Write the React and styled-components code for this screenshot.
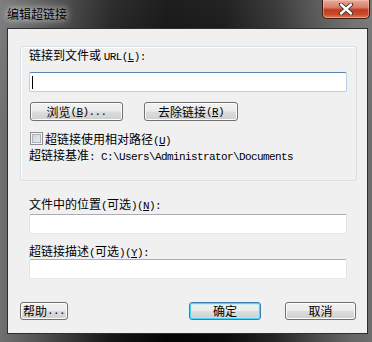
import React from 'react';
import styled, { createGlobalStyle } from 'styled-components';

const Global = createGlobalStyle`
  html, body { margin: 0; padding: 0; background: #1a1a1a; }
  body { width: 372px; height: 342px; overflow: hidden; }
`;

const Window = styled.div`
  width: 372px;
  height: 342px;
  box-sizing: border-box;
  display: flex;
  flex-direction: column;
  padding: 0 4px 8px 7px;
  background:
    linear-gradient(180deg, rgba(255,255,255,0.10) 0%, rgba(255,255,255,0) 40%),
    linear-gradient(90deg, #707070 0%, #5a5a5a 8%, #3a3a3a 18%, #161616 30%, #050505 45%, #0a0a0a 60%, #262626 74%, #4e4e4e 86%, #676767 95%, #6d6d6d 100%);
  font-family: "Noto Sans CJK SC", sans-serif;
  font-size: 12px;
  color: #000;
`;

const TitleBar = styled.div`
  height: 28px;
  flex: none;
  display: flex;
  align-items: flex-start;
`;

const Title = styled.div`
  margin-top: 6px;
  font-size: 12px;
  line-height: 16px;
  color: #000;
  text-shadow: 0 0 6px rgba(255,255,255,0.85), 0 0 10px rgba(255,255,255,0.6);
`;

const CloseButton = styled.div`
  margin-left: auto;
  margin-right: -2px;
  width: 48px;
  height: 19px;
  box-sizing: border-box;
  border: 1px solid #3b1c16;
  border-top: none;
  border-radius: 0 0 5px 5px;
  background: linear-gradient(180deg, #e9a89a 0%, #d8806d 40%, #c23a1f 55%, #c94b2c 80%, #e07b56 100%);
  box-shadow: inset 0 0 0 1px rgba(255,210,190,0.45);
  display: flex;
  align-items: center;
  justify-content: center;
`;

const Client = styled.div`
  flex: 1;
  display: flex;
  flex-direction: column;
  background: #f0f0f0;
  border: 1px solid #2e2e2e;
  padding: 17px 10px 0 12px;
`;

const Group = styled.div`
  display: flex;
  flex-direction: column;
  border: 1px solid #d5dfe5;
  border-radius: 3px;
  padding: 1px 9px 18px 8px;
  box-shadow: inset 1px 1px 0 #fff;
`;

const Label = styled.div`
  height: 14px;
  line-height: 14px;
  white-space: nowrap;
  margin-top: ${p => p.$mt || 0}px;
  margin-left: ${p => p.$ml || 0}px;
  margin-right: ${p => p.$mr || 0}px;
`;

const Latin = styled.span`
  font-family: "Liberation Mono", monospace;
  font-size: 11px;
  letter-spacing: -0.6px;
`;

const TextBox = styled.div`
  height: 20px;
  box-sizing: border-box;
  background: #fff;
  border: 1px solid;
  border-color: ${p => p.$focus ? '#5c84ad #b5cfe7 #b7d3ec #b5cfe7' : '#abadb3 #e2e3ea #e3e9ef #e2e3ea'};
  border-radius: 2px;
  margin-top: ${p => p.$mt || 0}px;
  margin-left: ${p => p.$ml || 0}px;
  margin-right: ${p => p.$mr || 0}px;
  display: flex;
  align-items: center;
  padding-left: 2px;
`;

const Caret = styled.span`
  width: 1px;
  height: 13px;
  background: #000;
`;

const ButtonRow = styled.div`
  display: flex;
  align-items: center;
  margin-top: ${p => p.$mt || 0}px;
  margin-left: ${p => p.$ml || 0}px;
  margin-right: ${p => p.$mr || 0}px;
  gap: ${p => p.$gap || 0}px;
`;

const Button = styled.div`
  width: ${p => p.$w}px;
  height: ${p => p.$h || 19}px;
  box-sizing: border-box;
  border: 1px solid ${p => p.$default ? '#3c7fb1' : '#707070'};
  border-radius: 3px;
  background: linear-gradient(180deg, #f2f2f2 0%, #ebebeb 48%, #dddddd 52%, #cfcfcf 100%);
  box-shadow: ${p => p.$default ? 'inset 0 0 0 1px #48d4f8, inset 0 0 0 2px rgba(180,235,252,0.6)' : 'inset 0 0 0 1px #fcfcfc'};
  display: flex;
  align-items: center;
  justify-content: ${p => p.$start ? 'flex-start' : 'center'};
  padding-left: ${p => p.$start ? 2 : 0}px;
  line-height: 14px;
  white-space: nowrap;
`;

const Spacer = styled.div`
  flex: 1;
`;

const CheckRow = styled.div`
  display: flex;
  align-items: center;
  height: 14px;
  margin-top: 10px;
  padding-left: 1px;
  gap: 2px;
`;

const CheckBox = styled.span`
  width: 13px;
  height: 13px;
  box-sizing: border-box;
  border: 1px solid #8e8f8f;
  background: #f4f4f4;
  box-shadow: inset 0 0 0 1px #f4f4f4, inset 0 0 0 2px #aeb3b9;
  background-image: linear-gradient(135deg, #cbcfd5 0%, #eef0f2 100%);
  flex: none;
`;

const u = (c) => <u>{c}</u>;

export default function App() {
  return (
    <>
      <Global />
      <Window>
        <TitleBar>
          <Title>编辑超链接</Title>
          <CloseButton>
            <svg width="16" height="12" viewBox="0 0 16 12">
              <path d="M3 1.5 L13 10.5 M13 1.5 L3 10.5" stroke="#3a2a26" strokeWidth="4.2" strokeLinecap="round" />
              <path d="M3 1.5 L13 10.5 M13 1.5 L3 10.5" stroke="#ffffff" strokeWidth="2.4" strokeLinecap="round" />
            </svg>
          </CloseButton>
        </TitleBar>
        <Client>
          <Group>
            <Label>链接到文件或 <Latin>URL({u('L')}):</Latin></Label>
            <TextBox $focus $mt={10}><Caret /></TextBox>
            <ButtonRow $mt={10} $gap={21} $ml={1}>
              <Button $w={93}>浏览<Latin>({u('B')})...</Latin></Button>
              <Button $w={94}>去除链接<Latin>({u('R')})</Latin></Button>
            </ButtonRow>
            <CheckRow>
              <CheckBox />
              <span>超链接使用相对路径<Latin>({u('U')})</Latin></span>
            </CheckRow>
            <Label $mt={3}>超链接基准<Latin>: C:\Users\Administrator\Documents</Latin></Label>
          </Group>
          <Label $mt={16} $ml={9}>文件中的位置<Latin>(</Latin>可选<Latin>)({u('N')}):</Latin></Label>
          <TextBox $mt={3} $ml={9} $mr={10} />
          <Label $mt={10} $ml={9}>超链接描述<Latin>(</Latin>可选<Latin>)({u('Y')}):</Latin></Label>
          <TextBox $mt={1} $ml={9} $mr={10} />
          <ButtonRow $mt={23} $gap={24} $mr={1}>
            <Button $w={48} $h={18} $start>帮助<Latin>...</Latin></Button>
            <Spacer />
            <Button $w={72} $h={18} $default>确定</Button>
            <Button $w={71} $h={18}>取消</Button>
          </ButtonRow>
        </Client>
      </Window>
    </>
  );
}
